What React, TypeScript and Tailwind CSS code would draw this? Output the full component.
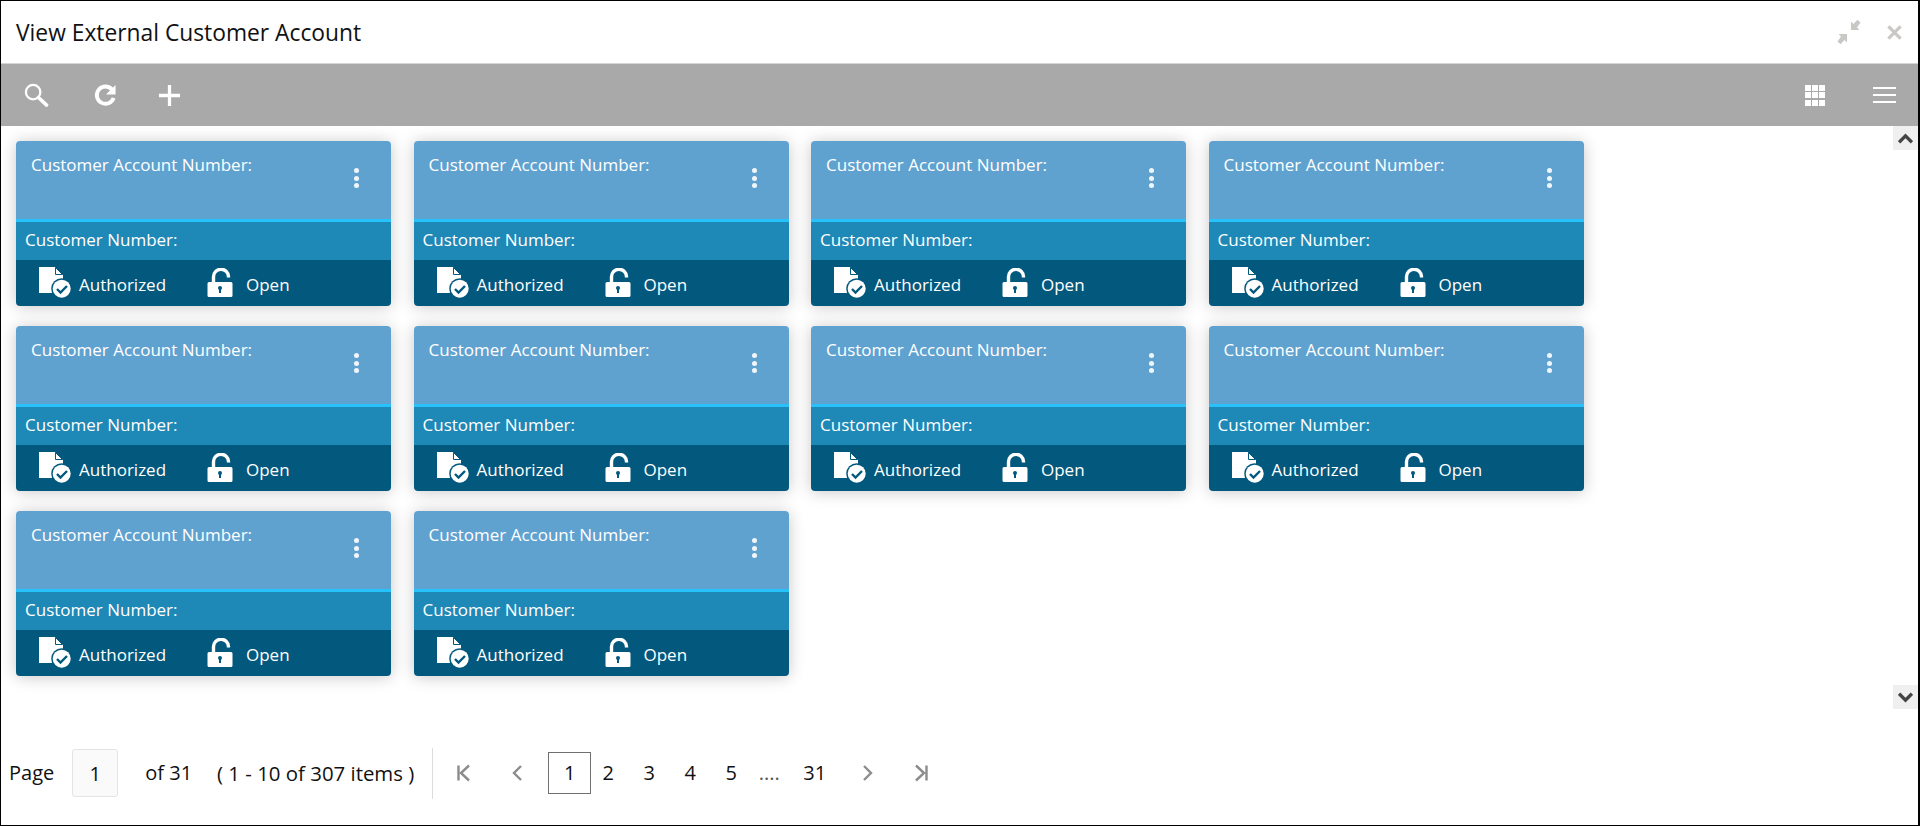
const FONT = "font-['Open_Sans','Noto_Sans',sans-serif]";

const DocCheckIcon = () => (
  <svg width="33" height="32" viewBox="0 0 33 32" className="shrink-0">
    <path d="M0 0h16l8 8v18H0z" fill="#fff" />
    <path d="M16.5 .5l7 7h-7z" fill="#fff" stroke="#02587d" strokeWidth="1" />
    <circle cx="22.7" cy="21.7" r="10.5" fill="#02587d" />
    <circle cx="22.7" cy="21.7" r="9" fill="#fff" />
    <path d="M18 22l3.5 3.5 6.5-6.5" fill="none" stroke="#02587d" strokeWidth="2.4" />
  </svg>
);

const LockIcon = () => (
  <svg width="26" height="30" viewBox="0 0 26 30" className="shrink-0">
    <path d="M6.5 15V9a7.5 7.5 0 0 1 15-0.5v1" fill="none" stroke="#fff" strokeWidth="3.4" />
    <path d="M2 14h22a1.5 1.5 0 0 1 1.5 1.5v12a1.5 1.5 0 0 1-1.5 1.5H2a1.5 1.5 0 0 1-1.5-1.5v-12A1.5 1.5 0 0 1 2 14z" fill="#fff" />
    <circle cx="13" cy="20" r="2" fill="#02587d" />
    <rect x="12" y="20" width="2" height="5" fill="#02587d" />
  </svg>
);

const Card = () => (
  <div className="h-[165px] rounded-[4px] overflow-hidden shadow-[0_1px_16px_rgba(0,0,0,0.22)] flex flex-col text-white">
    <div className="h-[78px] bg-[#5fa2d0] flex justify-between pl-[15px] pr-[32px]">
      <div className="text-[17px] leading-[22px] pt-[13px]">Customer Account Number:</div>
      <div className="flex flex-col gap-[2.5px] pt-[27px]">
        <span className="w-[5px] h-[5px] rounded-full bg-white/90" />
        <span className="w-[5px] h-[5px] rounded-full bg-white/90" />
        <span className="w-[5px] h-[5px] rounded-full bg-white/90" />
      </div>
    </div>
    <div className="h-[41px] bg-[#1e88b6] border-t-[3px] border-[#27c2fb] pl-[9px] text-[17px] leading-[36px]">
      Customer Number:
    </div>
    <div className="flex-1 bg-[#02587d] flex items-center pl-[23px] text-[17px]">
      <DocCheckIcon />
      <span className="ml-[7px] w-[128px] pt-[3px]">Authorized</span>
      <LockIcon />
      <span className="ml-[13px] pt-[3px]">Open</span>
    </div>
  </div>
);

const Chevron = ({ d }: { d: string }) => (
  <svg width="16" height="18" viewBox="0 0 16 18" fill="none" stroke="#8c8c8c" strokeWidth="2.4">
    <path d={d} />
  </svg>
);

export default function App() {
  return (
    <div className={`${FONT} w-[1920px] h-[826px] border border-black border-r-2 bg-white flex flex-col overflow-hidden text-[#111]`}>
      {/* title */}
      <div className="h-[63px] shrink-0 border-b border-[#d4d4d4] flex items-center justify-between pl-[15px] pr-[16px]">
        <h1 className="text-[22.8px] font-normal leading-none pt-[3px]">View External Customer Account</h1>
        <div className="flex items-center gap-[26px]">
          <svg width="24" height="26" viewBox="1 0 24 26" fill="#c9c8c4">
            <path d="M24.5 3.5L21.5 .7 17.5 5 15 2.5V11h8.5L21 8.5z" />
            <path d="M1.5 22.5l3 2.8 4-4.3 2.5 2.5V15H2.5L5 17.5z" />
          </svg>
          <svg width="15" height="15" viewBox="0 0 16 16" stroke="#c9c8c4" strokeWidth="3.4">
            <path d="M1.5 1.5l13 13M14.5 1.5l-13 13" />
          </svg>
        </div>
      </div>

      {/* toolbar */}
      <div className="h-[62px] shrink-0 bg-[#a9a9a9] flex items-center justify-between pl-[23px] pr-[22px]">
        <div className="flex items-center">
          <svg width="25" height="25" viewBox="0 0 26 26" fill="none" stroke="#fff">
            <circle cx="9.5" cy="9.5" r="7.5" strokeWidth="2.4" />
            <path d="M15 15l8.5 8" strokeWidth="3.6" strokeLinecap="round" />
          </svg>
          <svg className="ml-[45px]" width="23" height="24" viewBox="0 0 24 24" fill="none">
            <path d="M19 6.5A9 9 0 1 0 20.5 15" stroke="#fff" strokeWidth="4" />
            <path d="M22.5 1.5v10h-10z" fill="#fff" />
          </svg>
          <svg className="ml-[41px]" width="23" height="23" viewBox="0 0 24 24" stroke="#fff" strokeWidth="3.4">
            <path d="M12 1v22M1 12h22" />
          </svg>
        </div>
        <div className="flex items-center gap-[48px]">
          <div className="grid grid-cols-3 gap-[1.5px] w-[20px]">
            {Array.from({ length: 9 }).map((_, i) => (
              <span key={i} className="h-[6px] bg-white" />
            ))}
          </div>
          <div className="flex flex-col gap-[5px] w-[23px]">
            <span className="h-[2px] bg-white" />
            <span className="h-[2px] bg-white" />
            <span className="h-[2px] bg-white" />
          </div>
        </div>
      </div>

      {/* card area */}
      <div className="h-[583px] shrink-0 flex">
        <div className="flex-1 pl-[15px] pt-[15px]">
          <div className="grid grid-cols-[repeat(4,375px)] gap-x-[22.5px] gap-y-[20px]">
            {Array.from({ length: 10 }).map((_, i) => (
              <Card key={i} />
            ))}
          </div>
        </div>
        <div className="w-[25px] flex flex-col justify-between">
          <div className="h-[24px] bg-[#efefef] flex items-center justify-center">
            <svg width="15" height="11" viewBox="0 0 14 10" fill="none" stroke="#444" strokeWidth="3.2">
              <path d="M1 8.5l6-6 6 6" />
            </svg>
          </div>
          <div className="h-[24px] bg-[#efefef] flex items-center justify-center">
            <svg width="15" height="11" viewBox="0 0 14 10" fill="none" stroke="#444" strokeWidth="3.2">
              <path d="M1 1.5l6 6 6-6" />
            </svg>
          </div>
        </div>
      </div>

      {/* pagination */}
      <div className="flex-1 flex items-center pl-[8px] text-[20px] pt-[12px]">
        <span>Page</span>
        <div className="ml-[18px] w-[46px] h-[48px] rounded-[3px] border border-[#e4e4e4] bg-[#fafafa] flex items-center justify-center pt-[2px]">1</div>
        <span className="ml-[27px]">of 31</span>
        <span className="ml-[25px] text-[20.4px]">( 1 - 10 of 307 items )</span>
        <div className="ml-[18px] w-px h-[51px] bg-[#dcdcdc]" />
        <div className="flex items-center ml-[23px]">
          <Chevron d="M2.5 1.5v15M13 1.5L5 9l8 7.5" />
          <div className="ml-[38px]"><Chevron d="M11 2L4 9l7 7" /></div>
          <div className="ml-[22px] w-[43px] h-[42px] border border-[#707070] flex items-center justify-center">1</div>
          <span className="w-[34px] text-center">2</span>
          <span className="ml-[7px] w-[34px] text-center">3</span>
          <span className="ml-[7px] w-[34px] text-center">4</span>
          <span className="ml-[7px] w-[34px] text-center">5</span>
          <span className="ml-[6px] w-[30px] text-center text-[#555]">....</span>
          <span className="ml-[19px]">31</span>
          <div className="ml-[33px]"><Chevron d="M5 2l7 7-7 7" /></div>
          <div className="ml-[38px]"><Chevron d="M3 1.5l8 7.5-8 7.5M13.5 1.5v15" /></div>
        </div>
      </div>
    </div>
  );
}
